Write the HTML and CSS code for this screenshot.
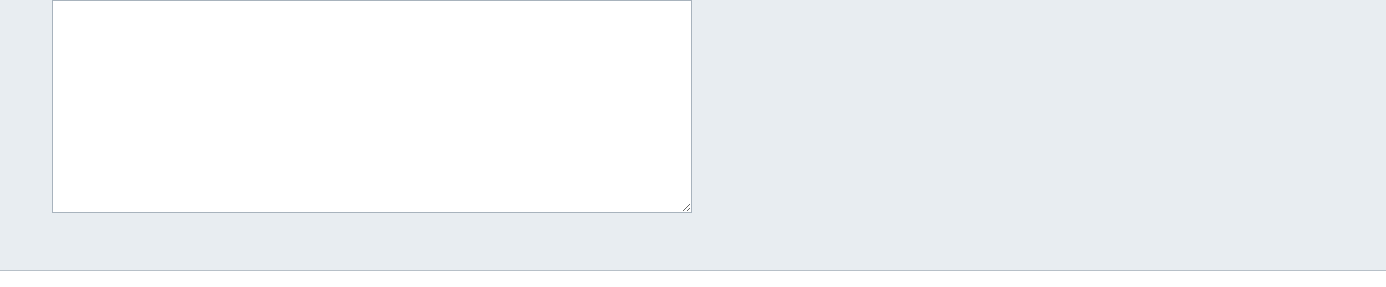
FILE: index.html
```html
<!DOCTYPE html>
<html>
<head>
<meta charset="utf-8">
<link rel="stylesheet" href="styles.css">
</head>
<body>
<section class="panel">
  <textarea class="field"></textarea>
</section>
</body>
</html>
```
FILE: styles.css
```css
html, body {
  margin: 0;
  padding: 0;
  background: #ffffff;
  font-family: "Liberation Sans", Arial, sans-serif;
}
.panel {
  background: #e8edf1;
  border-bottom: 1px solid #b7c0c8;
  padding: 0 0 57px 52px;
  display: flex;
}
.field {
  box-sizing: border-box;
  width: 640px;
  height: 213px;
  margin: 0;
  padding: 4px;
  border: 1px solid #a8b3bd;
  background: #ffffff;
  font: 13px "Liberation Sans", Arial, sans-serif;
  outline: none;
}
```
